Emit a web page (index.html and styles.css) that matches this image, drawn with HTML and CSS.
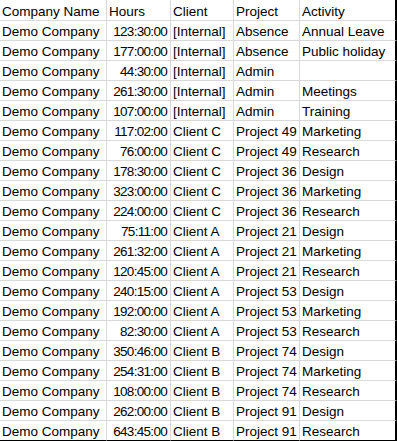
FILE: index.html
```html
<!DOCTYPE html>
<html lang="en">
<head>
<meta charset="utf-8">
<title>Timesheet export</title>
<link rel="stylesheet" href="styles.css">
</head>
<body>
<div class="sheet">
  <div class="row head">
    <div class="cell">Company Name</div><div class="cell">Hours</div><div class="cell">Client</div><div class="cell">Project</div><div class="cell last">Activity</div>
  </div>
  <div class="row"><div class="cell">Demo Company</div><div class="cell num">123:30:00</div><div class="cell">[Internal]</div><div class="cell">Absence</div><div class="cell last">Annual Leave</div></div>
  <div class="row"><div class="cell">Demo Company</div><div class="cell num">177:00:00</div><div class="cell">[Internal]</div><div class="cell">Absence</div><div class="cell last">Public holiday</div></div>
  <div class="row"><div class="cell">Demo Company</div><div class="cell num">44:30:00</div><div class="cell">[Internal]</div><div class="cell">Admin</div><div class="cell last"></div></div>
  <div class="row"><div class="cell">Demo Company</div><div class="cell num">261:30:00</div><div class="cell">[Internal]</div><div class="cell">Admin</div><div class="cell last">Meetings</div></div>
  <div class="row"><div class="cell">Demo Company</div><div class="cell num">107:00:00</div><div class="cell">[Internal]</div><div class="cell">Admin</div><div class="cell last">Training</div></div>
  <div class="row"><div class="cell">Demo Company</div><div class="cell num">117:02:00</div><div class="cell">Client C</div><div class="cell">Project 49</div><div class="cell last">Marketing</div></div>
  <div class="row"><div class="cell">Demo Company</div><div class="cell num">76:00:00</div><div class="cell">Client C</div><div class="cell">Project 49</div><div class="cell last">Research</div></div>
  <div class="row"><div class="cell">Demo Company</div><div class="cell num">178:30:00</div><div class="cell">Client C</div><div class="cell">Project 36</div><div class="cell last">Design</div></div>
  <div class="row"><div class="cell">Demo Company</div><div class="cell num">323:00:00</div><div class="cell">Client C</div><div class="cell">Project 36</div><div class="cell last">Marketing</div></div>
  <div class="row"><div class="cell">Demo Company</div><div class="cell num">224:00:00</div><div class="cell">Client C</div><div class="cell">Project 36</div><div class="cell last">Research</div></div>
  <div class="row"><div class="cell">Demo Company</div><div class="cell num">75:11:00</div><div class="cell">Client A</div><div class="cell">Project 21</div><div class="cell last">Design</div></div>
  <div class="row"><div class="cell">Demo Company</div><div class="cell num">261:32:00</div><div class="cell">Client A</div><div class="cell">Project 21</div><div class="cell last">Marketing</div></div>
  <div class="row"><div class="cell">Demo Company</div><div class="cell num">120:45:00</div><div class="cell">Client A</div><div class="cell">Project 21</div><div class="cell last">Research</div></div>
  <div class="row"><div class="cell">Demo Company</div><div class="cell num">240:15:00</div><div class="cell">Client A</div><div class="cell">Project 53</div><div class="cell last">Design</div></div>
  <div class="row"><div class="cell">Demo Company</div><div class="cell num">192:00:00</div><div class="cell">Client A</div><div class="cell">Project 53</div><div class="cell last">Marketing</div></div>
  <div class="row"><div class="cell">Demo Company</div><div class="cell num">82:30:00</div><div class="cell">Client A</div><div class="cell">Project 53</div><div class="cell last">Research</div></div>
  <div class="row"><div class="cell">Demo Company</div><div class="cell num">350:46:00</div><div class="cell">Client B</div><div class="cell">Project 74</div><div class="cell last">Design</div></div>
  <div class="row"><div class="cell">Demo Company</div><div class="cell num">254:31:00</div><div class="cell">Client B</div><div class="cell">Project 74</div><div class="cell last">Marketing</div></div>
  <div class="row"><div class="cell">Demo Company</div><div class="cell num">108:00:00</div><div class="cell">Client B</div><div class="cell">Project 74</div><div class="cell last">Research</div></div>
  <div class="row"><div class="cell">Demo Company</div><div class="cell num">262:00:00</div><div class="cell">Client B</div><div class="cell">Project 91</div><div class="cell last">Design</div></div>
  <div class="row end"><div class="cell">Demo Company</div><div class="cell num">643:45:00</div><div class="cell">Client B</div><div class="cell">Project 91</div><div class="cell last">Research</div></div>
</div>
</body>
</html>
```
FILE: styles.css
```css
html, body {
  margin: 0;
  padding: 0;
  background: #ffffff;
}

.sheet {
  width: 397px;
  font-family: "Liberation Sans", Arial, sans-serif;
  font-size: 13.5px;
  color: #000000;
}

.row {
  display: grid;
  grid-template-columns: 107px 64px 63px 66px 97px;
  height: 20px;
}

.row.head {
  height: 21px;
}

.cell {
  box-sizing: border-box;
  border-right: 1px solid #d9d9d9;
  border-bottom: 1px solid #d9d9d9;
  padding: 3px 2px 0 2px;
  line-height: 15px;
  white-space: nowrap;
  overflow: hidden;
}

.row.head .cell {
  padding-top: 4px;
}

.cell.num {
  text-align: right;
  padding-right: 3px;
  letter-spacing: -0.7px;
}

.cell.last {
  border-right: 2px solid #000000;
}

.row.end .cell {
  border-bottom-color: #000000;
}
```
